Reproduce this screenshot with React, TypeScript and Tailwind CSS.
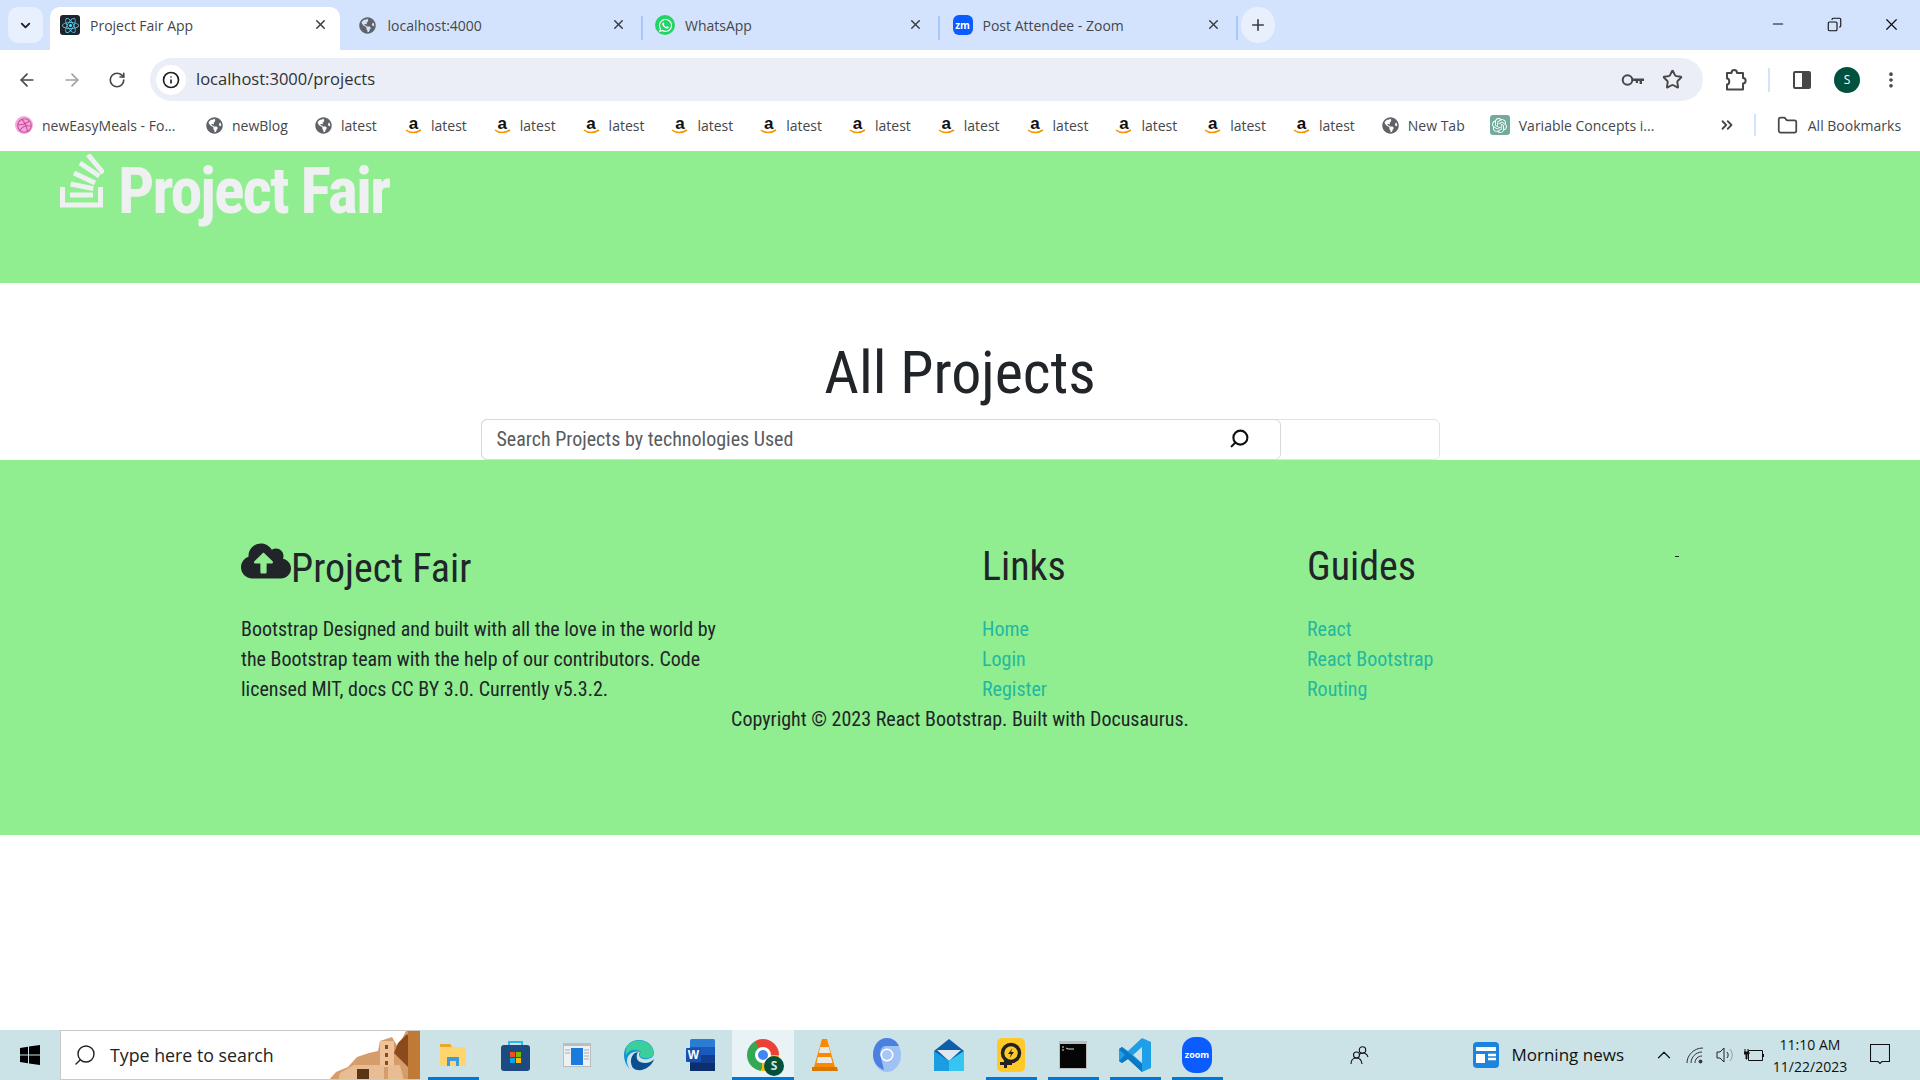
import React from "react";
import { ArrowLeft, ArrowRight, RotateCw, Info, Star, EllipsisVertical, X, Plus, Minus, Folder, ChevronDown, ChevronUp, ChevronsRight, Search, Copy } from "lucide-react";
import { FaGlobeAmericas, FaReact, FaWhatsapp, FaDribbble, FaCloudUploadAlt } from "react-icons/fa";
import { SiOpenai } from "react-icons/si";

const Globe = () => <FaGlobeAmericas size={17} className="text-[#5f6368] shrink-0" />;

const AmazonIcon = () => (
  <div className="relative w-[17px] h-[20px] shrink-0 text-center text-[17px] leading-[17px] font-bold text-[#111] [font-family:'Liberation_Sans',sans-serif]">
    a
    <svg width="17" height="6" viewBox="0 0 17 6" className="absolute left-0 top-[14px]">
      <path d="M1 1c4 3.400 10 3.400 15 0" fill="none" stroke="#f79400" strokeWidth="1.600" />
    </svg>
  </div>
);

const Tab: React.FC<{ icon: React.ReactNode; title: string; active?: boolean; sep?: boolean }> = ({ icon, title, active, sep }) => (
  <div className={`relative flex items-center h-[43px] pl-[9px] pb-[7px] rounded-t-[10px] shrink-0 ${active ? "bg-white w-[290px] mr-[7.500px]" : "w-[297.500px]"}`}>
    <div className="w-[22px] h-[22px] flex items-center justify-center shrink-0">{icon}</div>
    <span className="ml-[9px] text-[14px] text-[#45474a] w-[220px] truncate">{title}</span>
    <X size={15} strokeWidth={2.4} className="text-[#3c4043] absolute left-[263px] top-[10px]" />
    {sep && <div className="absolute left-[293px] top-[9px] w-[2px] h-[24px] bg-[#a8c7fa]" />}
  </div>
);

const Bookmark: React.FC<{ icon: React.ReactNode; label: string; className: string }> = ({ icon, label, className }) => (
  <div className={`flex items-center gap-[9px] shrink-0 ${className}`}>
    {icon}
    <span className="text-[14px] text-[#45474a] whitespace-nowrap">{label}</span>
  </div>
);

const latestCount = [0, 1, 2, 3, 4, 5, 6, 7, 8, 9, 10];

const BrowserChrome = () => (
  <div className="[font-family:'Open_Sans',sans-serif] shrink-0">
    {/* tab strip */}
    <div className="h-[50px] bg-[#d3e3fd] flex items-end relative">
      <div className="w-[35px] h-[36px] ml-[8px] mb-[7px] mr-[7px] rounded-[10px] bg-[#e9f0fd] flex items-center justify-center shrink-0">
        <ChevronDown size={15} strokeWidth={3} className="text-[#1f1f1f]" />
      </div>
      <Tab active title="Project Fair App" icon={<div className="w-[20px] h-[20px] rounded-[3px] bg-[#20232a] flex items-center justify-center"><FaReact size={17} className="text-[#61dafb]" /></div>} />
      <Tab title="localhost:4000" sep icon={<Globe />} />
      <Tab title="WhatsApp" sep icon={<div className="w-[20px] h-[20px] rounded-full bg-[#25d366] flex items-center justify-center"><FaWhatsapp size={15} className="text-white" /></div>} />
      <Tab title="Post Attendee - Zoom" sep icon={<div className="w-[20px] h-[20px] rounded-[6px] bg-[#0b5cff] flex items-center justify-center text-white text-[10px] font-bold leading-none">zm</div>} />
      <div className="w-[34px] h-[36px] ml-[1px] mb-[7px] rounded-full bg-[#e9f0fd] flex items-center justify-center shrink-0">
        <Plus size={18} strokeWidth={2.2} className="text-[#3c4043]" />
      </div>
      <div className="ml-auto flex items-center h-[50px] pb-[2px] text-[#111]">
        <div className="w-[56px] flex justify-center"><Minus size={16} strokeWidth={1.7} /></div>
        <div className="w-[57px] flex justify-center"><Copy size={15} strokeWidth={1.8} className="-scale-x-100" /></div>
        <div className="w-[57px] flex justify-center"><X size={19} strokeWidth={1.6} /></div>
      </div>
    </div>
    {/* toolbar */}
    <div className="h-[50px] pt-[9px] bg-white rounded-t-[10px] flex items-center">
      <div className="w-[150px] flex items-center text-[#474747] shrink-0">
        <div className="w-[46px] flex justify-end pr-[9px]"><ArrowLeft size={20} strokeWidth={2} /></div>
        <div className="w-[47px] flex justify-center pl-[4px] text-[#a0a1a3]"><ArrowRight size={20} strokeWidth={2} /></div>
        <div className="w-[47px] flex justify-center"><RotateCw size={18} strokeWidth={2.2} /></div>
      </div>
      <div className="w-[1553px] h-[43px] rounded-full bg-[#ebeef7] flex items-center pl-[6px] pr-[20px] shrink-0">
        <div className="w-[30px] h-[30px] rounded-full bg-white flex items-center justify-center">
          <Info size={18} strokeWidth={2.2} className="text-[#1f1f1f]" />
        </div>
        <span className="ml-[10px] text-[16.500px] text-[#2f3133]">localhost:3000/projects</span>
        <svg width="24" height="14" viewBox="0 0 24 14" className="ml-auto mr-[17px] text-[#474747]">
          <circle cx="6.500" cy="7" r="4.800" fill="none" stroke="currentColor" strokeWidth="2" />
          <path d="M11 5.500h12v2.400h-2v3h-2.400v-3h-1.600v2h-2.200v-2H11z" fill="currentColor" />
        </svg>
        <Star size={21} strokeWidth={2.2} className="text-[#474747]" />
      </div>
      <div className="flex-1 flex items-center text-[#474747]">
        <div className="w-[66px] flex justify-center">
          <svg width="22" height="24" viewBox="0 0 22 24" fill="none" stroke="currentColor" strokeWidth="2" strokeLinejoin="round">
            <path d="M2 5h4.500c0-4 5.500-4 5.500 0H18v5c3.500 0 3.500 5.500 0 5.500V21.500H2v-5c3 0 3-6 0-6z" />
          </svg>
        </div>
        <div className="w-[2px] h-[24px] bg-[#d3e3fd] -ml-[1px]" />
        <div className="w-[64px] flex justify-center">
          <div className="w-[18px] h-[18px] rounded-[2px] border-2 border-[#474747] flex justify-end"><div className="w-[7px] bg-[#474747]" /></div>
        </div>
        <div className="w-[26px] h-[26px] rounded-full bg-[#01513f] text-white text-[12px] flex items-center justify-center">S</div>
        <div className="w-[61px] flex justify-center"><EllipsisVertical size={20} strokeWidth={2.4} /></div>
      </div>
    </div>
    {/* bookmarks */}
    <div className="h-[51px] bg-white flex items-center pl-[15px] pb-[1px]">
      <Bookmark className="w-[191px]" label="newEasyMeals - Fo..." icon={<div className="w-[18px] h-[18px] rounded-full bg-[#f3a6d8] flex items-center justify-center"><FaDribbble size={15} className="text-[#c94f9e]" /></div>} />
      <Bookmark className="w-[109px]" label="newBlog" icon={<Globe />} />
      <Bookmark className="w-[90px]" label="latest" icon={<Globe />} />
      {latestCount.map((i) => (
        <Bookmark key={i} className="w-[88.800px]" label="latest" icon={<AmazonIcon />} />
      ))}
      <Bookmark className="w-[108px]" label="New Tab" icon={<Globe />} />
      <Bookmark className="w-[229px]" label="Variable Concepts i..." icon={<div className="w-[20px] h-[20px] rounded-[3px] bg-[#74aa9c] flex items-center justify-center"><SiOpenai size={15} className="text-white" /></div>} />
      <ChevronsRight size={18} strokeWidth={2.4} className="text-[#474747] -ml-[1px] shrink-0" />
      <div className="w-[2px] h-[22px] bg-[#d3e3fd] ml-[18px] shrink-0" />
      <Folder size={21} strokeWidth={2} className="text-[#474747] ml-[21px] shrink-0" />
      <span className="ml-[10px] text-[14px] text-[#45474a] whitespace-nowrap">All Bookmarks</span>
    </div>
  </div>
);

const StackLogo = () => (
  <svg width="44" height="54" viewBox="0 0 44 54" fill="none" stroke="#eef0f2" strokeWidth="5" className="shrink-0">
    <path d="M2.500 33v18h38V33" />
    <path d="M10 41h23M10.600 30l22.700 4.600M14 19l21 10M20 9l19.300 13M28 .700l15.300 18.300" />
  </svg>
);

const FooterLinks: React.FC<{ title: string; links: string[]; className: string }> = ({ title, links, className }) => (
  <div className={className}>
    <h4 className="text-[40px] leading-[48px] text-[#212529]">{title}</h4>
    <ul className="mt-[23px] text-[20px] leading-[30px] text-[#25b79f]">
      {links.map((l) => <li key={l}>{l}</li>)}
    </ul>
  </div>
);

const PageContent = () => (
  <div className="flex-1 [font-family:'Roboto',sans-serif] [font-stretch:75%] text-[#212529] bg-white">
    <header className="h-[132px] bg-[#90ee90] pl-[60px] flex items-start">
      <div className="mt-[3px]"><StackLogo /></div>
      <span className="ml-[14px] text-[64px] leading-[76px] font-bold tracking-[-2px] text-[#eef0f2] mt-[3px]">Project Fair</span>
    </header>
    <main className="h-[177px] flex flex-col items-center">
      <h1 className="mt-[54px] text-[60px] leading-[72px] font-normal">All Projects</h1>
      <div className="mt-[10px] w-[959px] h-[41px] flex rounded-[6px] border border-[#dfe3e7]">
        <div className="w-[800px] h-[41px] -ml-px -mt-px shrink-0 rounded-[6px] border border-[#d5dade] flex items-center pl-[15px] pr-[30px] pb-[2px]">
          <span className="text-[20px] text-[#595c5f]">Search Projects by technologies Used</span>
          <Search size={21} strokeWidth={2.4} className="ml-auto -scale-x-100 text-[#111]" />
        </div>
      </div>
    </main>
    <footer className="h-[375px] bg-[#90ee90] relative">
      <div className="flex pt-[83px] pl-[241px]">
        <div className="w-[741px] shrink-0">
          <div className="flex items-start h-[48px]">
            <FaCloudUploadAlt size={50} className="-mt-[7px]" />
            <h4 className="text-[40px] leading-[48px] mt-[2px]">Project Fair</h4>
          </div>
          <p className="mt-[23px] w-[490px] text-[20px] leading-[30px]">
            Bootstrap Designed and built with all the love in the world by the Bootstrap team with the help of our contributors. Code licensed MIT, docs CC BY 3.0. Currently v5.3.2.
          </p>
        </div>
        <FooterLinks className="w-[325px] shrink-0" title="Links" links={["Home", "Login", "Register"]} />
        <FooterLinks className="w-[325px] shrink-0" title="Guides" links={["React", "React Bootstrap", "Routing"]} />
      </div>
      <p className="text-center text-[20px] leading-[30px]">Copyright © 2023 React Bootstrap. Built with Docusaurus.</p>
      <div className="absolute left-[1675px] top-[96px] w-[4px] h-[1px] bg-[#212529]" />
    </footer>
  </div>
);

const Tile: React.FC<{ children: React.ReactNode; bar?: boolean; active?: boolean }> = ({ children, bar, active }) => (
  <div className={`relative w-[62px] h-[50px] shrink-0 flex items-center justify-center ${active ? "bg-[#e9f3f5]" : ""}`}>
    {children}
    {bar && <div className={`absolute bottom-0 h-[3px] bg-[#0078d4] ${active ? "left-0 right-0" : "left-[6px] right-[5px]"}`} />}
  </div>
);

const Taskbar = () => (
  <div className="h-[50px] bg-[#cbe3e7] flex items-center shrink-0 [font-family:'Open_Sans',sans-serif] relative">
    <div className="w-[60px] flex justify-center shrink-0">
      <svg width="20" height="20" viewBox="0 0 20 20" fill="#000"><path d="M0 3l8-1.200V9.500H0zM9 1.600L20 0v9.500H9zM0 10.500h8v7.700L0 17zM9 10.500h11V20L9 18.400z" /></svg>
    </div>
    <div className="relative w-[360px] h-[50px] bg-white border-y border-[#c9c9c9] border-l flex items-center shrink-0 overflow-hidden">
      <Search size={24} strokeWidth={1.4} className="ml-[12px] -scale-x-100 text-[#222]" />
      <span className="ml-[13px] text-[17.800px] text-[#222]">Type here to search</span>
      <svg width="92" height="50" viewBox="0 0 92 50" className="absolute right-0 top-0">
        <path d="M0 50l8-9 12-5 9-10 12-4 9-2 2-10 12-4 6 10 8-16h14v50z" fill="#d59c6c" />
        <path d="M52 10h14v26H52z" fill="#eec39a" />
        <path d="M57 14h3v4h-3zM57 22h3v4h-3zM57 30h3v4h-3z" fill="#8a4a1c" />
        <path d="M66 22l4-10 8-8 14-4v34l-12 2z" fill="#8a4a1c" />
        <path d="M12 42l14-8h30v16H10zM60 34h12l4 16H60z" fill="#e9bd94" />
        <path d="M29 38h12v12H29z" fill="#5a3417" />
        <path d="M80 0h12v50H80z" fill="#c07a38" />
      </svg>
    </div>
    <div className="w-[2px] shrink-0" />
    <Tile bar>
      <svg width="28" height="26" viewBox="0 0 28 26"><path d="M1 2h10l3 3h13v19H1z" fill="#ffd66e" /><path d="M1 2h10l2 3H1z" fill="#e9a825" /><path d="M8 24v-9h12v9h-3v-5h-6v5z" fill="#3f9ae0" /></svg>
    </Tile>
    <Tile>
      <svg width="29" height="32" viewBox="0 0 29 32"><path d="M8 8V3h13v5" fill="none" stroke="#2bb8f0" strokeWidth="2" /><rect y="6" width="29" height="26" rx="3" fill="#1d4a80" /><rect x="9" y="13" width="5" height="5" fill="#f25022" /><rect x="15" y="13" width="5" height="5" fill="#7fba00" /><rect x="9" y="19" width="5" height="5" fill="#00a4ef" /><rect x="15" y="19" width="5" height="5" fill="#ffb900" /></svg>
    </Tile>
    <Tile>
      <svg width="28" height="24" viewBox="0 0 28 24"><rect width="28" height="24" fill="#b9bec2" /><rect x="1" y="3" width="26" height="20" fill="#eef1f3" /><rect x="8" y="5" width="12" height="17" fill="#1a7bdc" /><path d="M2 7h5M2 10h5M21 7h5M21 10h5M21 13h5M21 16h5" stroke="#a8aeb3" /></svg>
    </Tile>
    <Tile>
      <svg width="32" height="32" viewBox="0 0 32 32"><path d="M1 16C1 7 8 1 16 1c9 0 15 7 15 13 0 5-6 7-11 6-4-1-5-5-3-7-6-2-13 2-13 9 0 3 1 6 3 8C4 28 1 22 1 16z" fill="#1492d6" /><path d="M4 7C10-1 27-1 31 13c1 5-6 7-11 6-4-1-4-5-2-6C12 9 6 11 3 16c-1-3 0-6 1-9z" fill="#3bcf9c" /><path d="M10 29c-4-6-2-15 5-16-2 3-2 8 2 10 5 2 11 1 14-3-2 8-14 15-21 9z" fill="#0a4e8f" /></svg>
    </Tile>
    <Tile>
      <svg width="30" height="34" viewBox="0 0 30 34"><rect x="4" y="1" width="25" height="32" rx="1.500" fill="#2b7cd3" /><rect x="4" y="9" width="25" height="8" fill="#185abd" /><rect x="4" y="17" width="25" height="8" fill="#103f91" /><rect x="4" y="25" width="25" height="8" fill="#0c2f6e" /><rect y="10" width="15" height="14" rx="1" fill="#1551b1" /><text x="7.500" y="21" textAnchor="middle" fontSize="12" fontWeight="700" fontFamily="Liberation Sans" fill="#fff">W</text></svg>
    </Tile>
    <Tile active bar>
      <div className="relative w-[32px] h-[32px] rounded-full [background:conic-gradient(from_-30deg,#ea4335_0_33%,#fbbc05_33%_60%,#34a853_60%_100%)] flex items-center justify-center">
        <div className="w-[16px] h-[16px] rounded-full bg-[#4285f4] border-[3px] border-white" />
        <div className="absolute -right-[5px] -bottom-[5px] w-[20px] h-[20px] rounded-full bg-[#01513f] text-[#cfe6df] text-[12px] font-bold flex items-center justify-center">S</div>
      </div>
    </Tile>
    <Tile>
      <svg width="26" height="34" viewBox="0 0 26 34"><path d="M10 1h5l8 28H2z" fill="#f98a00" /><path d="M8.300 9h8.500l1.500 6H7zM6 19h13l1.500 6h-16z" fill="#e9e9e9" /><path d="M0 29h25l1 4H0z" fill="#d77700" /></svg>
    </Tile>
    <Tile>
      <svg width="28" height="34" viewBox="0 0 28 34"><ellipse cx="14" cy="17" rx="14" ry="17" fill="#9fc2f5" /><path d="M0 17C0 7 6 0 14 0c5 0 10 3 12 8H13C8 8 6 14 8 20l3 12C5 30 0 24 0 17z" fill="#4c80e0" /><circle cx="14" cy="17" r="6.500" fill="#fff" /><circle cx="14" cy="17" r="5" fill="#a9c7f6" /></svg>
    </Tile>
    <Tile>
      <svg width="30" height="34" viewBox="0 0 30 34"><path d="M0 13L15 1l15 12v20H0z" fill="#0f5ea8" /><path d="M3 12h24L15 23z" fill="#dfe8ee" /><path d="M0 13l15 10 15-10v20H0z" fill="#1b9de2" /><path d="M15 23l15-10v20H15z" fill="#35c5f0" /></svg>
    </Tile>
    <Tile bar>
      <svg width="28" height="34" viewBox="0 0 28 34"><rect width="28" height="34" rx="5" fill="#ffc928" /><circle cx="14" cy="15" r="8.500" fill="none" stroke="#222" strokeWidth="3.500" /><path d="M15.500 10L11 16h3l-1.500 4 4.500-6h-3z" fill="#222" /><rect x="3" y="24" width="12" height="3" fill="#222" /><rect x="7" y="22" width="3" height="8" fill="#222" /></svg>
    </Tile>
    <Tile bar>
      <svg width="28" height="28" viewBox="0 0 28 28"><rect width="28" height="28" fill="#b8bec2" /><rect x="1" y="3" width="26" height="24" fill="#050505" /><path d="M3 6h2M3 9h2M7 7l2 1h6" stroke="#ddd" strokeWidth="1" fill="none" /></svg>
    </Tile>
    <Tile bar>
      <svg width="32" height="36" viewBox="0 0 32 36"><path d="M23 1l9 4v26l-9 4-14-13-6 4-3-2v-12l3-2 6 4z" fill="#1f9fe8" /><path d="M23 10l-9 8 9 8z" fill="#cbe3e7" /><path d="M0 12l3-2 20 17v8L9 22l-6 4-3-2 6-6z" fill="#0a78c2" /></svg>
    </Tile>
    <Tile bar>
      <div className="w-[30px] h-[36px] rounded-[13px] bg-[#0b5cff] flex items-center justify-center text-white text-[9px] font-bold">zoom</div>
    </Tile>
    <div className="flex items-center ml-auto">
      <svg width="20" height="20" viewBox="0 0 20 20" fill="none" stroke="#111" strokeWidth="1.100" className="mr-[103px]">
        <circle cx="12.500" cy="5" r="3.200" /><circle cx="6.500" cy="10" r="3" /><path d="M10 9c3-2 7-1 8 3M1 19c0-4 2.500-6 5.500-6s5 2 5.500 6" />
      </svg>
      <svg width="26" height="26" viewBox="0 0 26 26" className="mr-[12px]"><rect width="26" height="26" rx="4" fill="#1b84dc" /><rect x="3" y="5" width="20" height="4" fill="#fff" /><rect x="3" y="12" width="9" height="9" fill="#fff" /><path d="M15 13h8M15 17h8" stroke="#fff" strokeWidth="2.400" /></svg>
      <span className="text-[17px] text-[#111] mr-[29px]">Morning news</span>
      <ChevronUp size={22} strokeWidth={1.3} className="text-[#111] mr-[11px]" />
      <svg width="19" height="19" viewBox="0 0 19 19" fill="none" stroke="#333" strokeWidth="1" className="mr-[10px]">
        <path d="M1 17C1 9 8 2 17 2M5 17c0-6 5-11 11-11M9 17c0-4 3-7 7-7" /><circle cx="14.500" cy="15.500" r="1.500" fill="#333" />
      </svg>
      <svg width="20" height="20" viewBox="0 0 20 20" fill="none" stroke="#222" strokeWidth="1" className="mr-[9px]">
        <path d="M2 7h3l4-4v14l-4-4H2zM12 7c1.500 2 1.500 4 0 6" /><path d="M15 4c3 4 3 8 0 12" stroke="#999" />
      </svg>
      <svg width="20" height="14" viewBox="0 0 20 14" fill="none" stroke="#111" strokeWidth="1" className="mr-[8px]">
        <path d="M4.500 2.500h14v10h-14zM19.500 6v3" /><path d="M1 1v3M4 1v3M0 4h5v2H3v5H2V6H0z" fill="#111" />
      </svg>
      <div className="w-[76px] mr-[22px] text-center text-[14px] leading-[22px] text-[#111]">
        <div className="pt-[1px]">11:10 AM</div>
        <div>11/22/2023</div>
      </div>
      <svg width="20" height="22" viewBox="0 0 20 22" fill="none" stroke="#111" strokeWidth="1.100" className="mr-[30px]"><path d="M.5.5h19v17H12l-2 2-2-2H.5z" /></svg>
    </div>
  </div>
);

export default function App() {
  return (
    <div className="w-[1920px] h-[1080px] flex flex-col overflow-hidden bg-white">
      <BrowserChrome />
      <PageContent />
      <Taskbar />
    </div>
  );
}
